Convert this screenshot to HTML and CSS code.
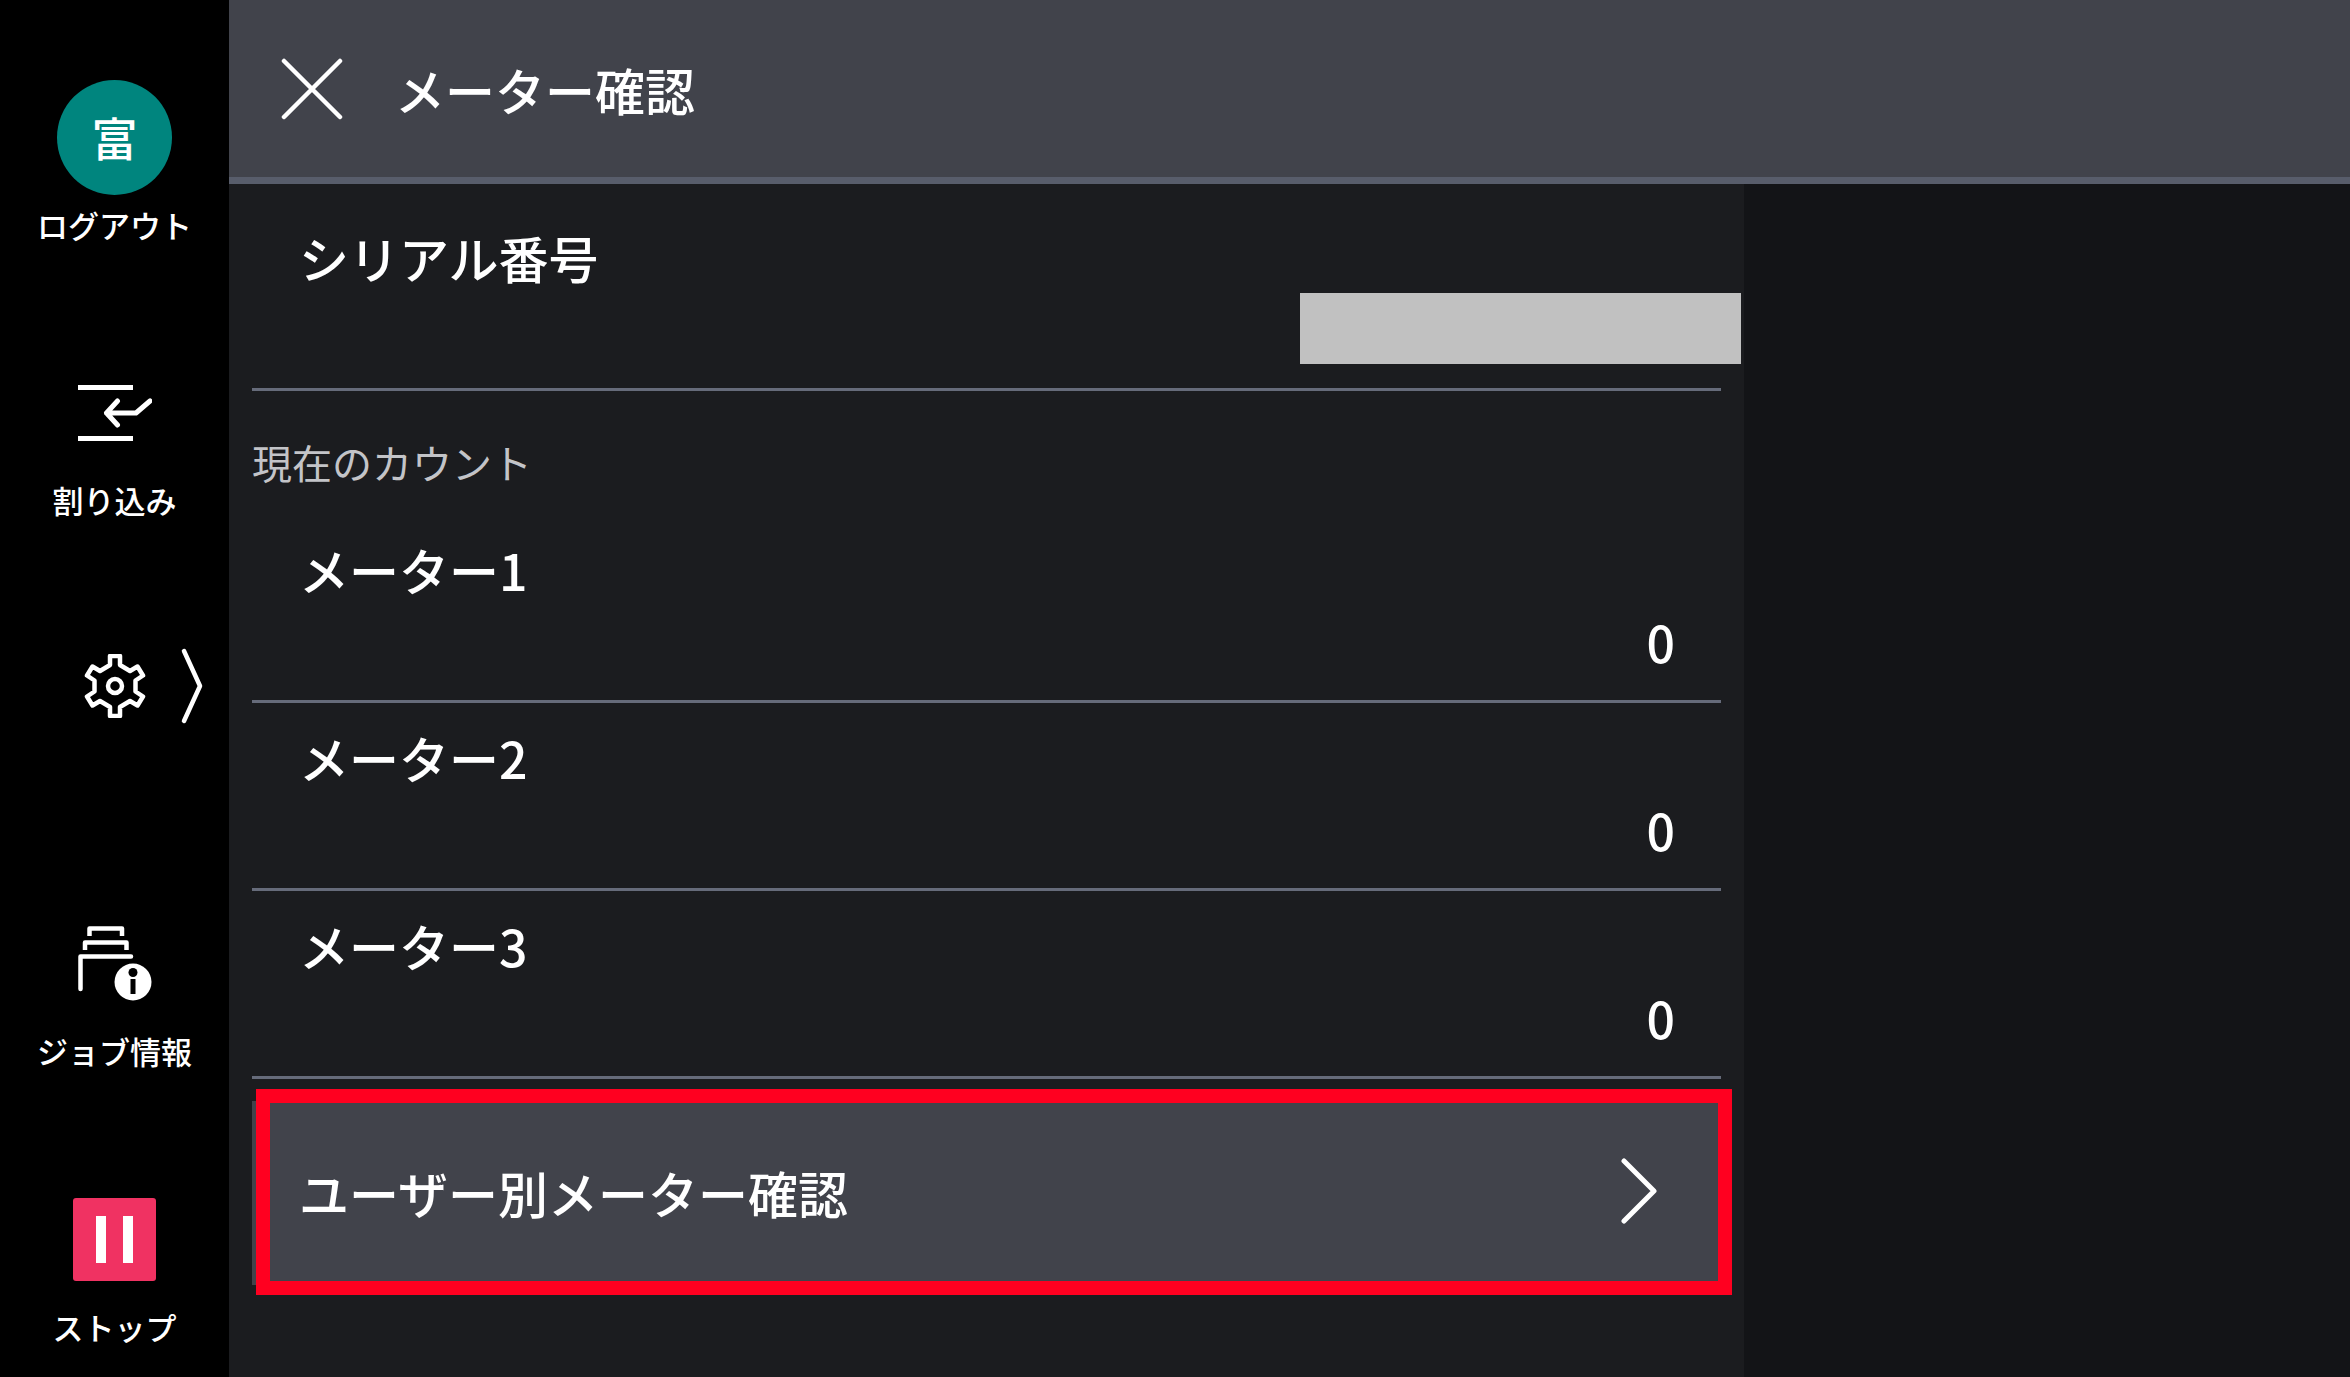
FILE: index.html
```html
<!DOCTYPE html>
<html lang="ja">
<head>
  <meta charset="UTF-8" />
  <meta name="viewport" content="width=device-width, initial-scale=1.0" />
  <title>メーター確認</title>
  <link rel="stylesheet" href="styles.css">
</head>
<body>
  <nav class="sidebar">
    <button class="side-item">
      <span class="side-icon"><span class="avatar">富</span></span>
      <span class="side-label">ログアウト</span>
    </button>
    <button class="side-item">
      <span class="side-icon">
        <svg width="74" height="56" viewBox="0 0 74 56" fill="none" stroke="#fff" stroke-width="5">
          <path d="M0 2.5H55M0 53.5H55" />
          <path d="M39.5 16L28.5 28L39.5 40M28.5 28H58L72 16" stroke-linecap="round" stroke-linejoin="round" />
        </svg>
      </span>
      <span class="side-label">割り込み</span>
    </button>
    <button class="side-item side-settings" aria-label="設定">
      <svg width="64" height="64" viewBox="-32 -32 64 64" fill="none" stroke="#fff" stroke-width="4.5" stroke-linejoin="round">
        <path d="M-5 -30H5V-21L15 -15L22.5 -19.5L28 -10.5L20.5 -5.5V5.5L28 10.5L22.5 19.5L15 15L5 21V30H-5V21L-15 15L-22.5 19.5L-28 10.5L-20.5 5.5V-5.5L-28 -10.5L-22.5 -19.5L-15 -15L-5 -21Z" />
        <circle r="7" />
      </svg>
      <svg class="side-arrow" width="24" height="76" viewBox="0 0 24 76" fill="none" stroke="#fff" stroke-width="4.5" stroke-linecap="round" stroke-linejoin="round">
        <path d="M4 3L20 38L4 73" />
      </svg>
    </button>
    <button class="side-item">
      <span class="side-icon">
        <svg width="74" height="75" viewBox="0 0 74 75" fill="none" stroke="#fff" stroke-width="4.5" stroke-linejoin="round">
          <path d="M11.5 10V2.5H44V10M7 24V16.5H48.5V24" />
          <path d="M2.5 63V30.5H53" stroke-linecap="round" />
          <circle cx="55" cy="56" r="18.5" fill="#fff" stroke="none" />
          <circle cx="55" cy="46.5" r="4.5" fill="#000" stroke="none" />
          <path d="M55 53V68" stroke="#000" stroke-width="5" />
        </svg>
      </span>
      <span class="side-label">ジョブ情報</span>
    </button>
    <button class="side-item">
      <span class="side-icon">
        <svg width="83" height="83" viewBox="0 0 83 83">
          <rect width="83" height="83" rx="3" fill="#f03262" />
          <path d="M23 18H33V65H23ZM50 18H60V65H50Z" fill="#fff" />
        </svg>
      </span>
      <span class="side-label">ストップ</span>
    </button>
  </nav>

  <div class="screen">
    <header class="header">
      <button class="close" aria-label="閉じる">
        <svg width="62" height="62" viewBox="0 0 62 62" fill="none" stroke="#fff" stroke-width="4.5" stroke-linecap="round">
          <path d="M3 3L59 59M59 3L3 59" />
        </svg>
      </button>
      <h1>メーター確認</h1>
    </header>

    <div class="content">
      <main class="panel">
        <dl class="list">
          <div class="row">
            <dt>シリアル番号</dt>
            <dd class="masked"></dd>
          </div>
        </dl>
        <h2>現在のカウント</h2>
        <dl class="list">
          <div class="row">
            <dt>メーター1</dt>
            <dd>0</dd>
          </div>
          <div class="row">
            <dt>メーター2</dt>
            <dd>0</dd>
          </div>
          <div class="row">
            <dt>メーター3</dt>
            <dd>0</dd>
          </div>
        </dl>
        <button class="user-meter">
          <span>ユーザー別メーター確認</span>
          <svg width="36" height="68" viewBox="0 0 36 68" fill="none" stroke="#fff" stroke-width="5" stroke-linecap="round" stroke-linejoin="round">
            <path d="M3 3L33 33L3 63" />
          </svg>
        </button>
      </main>
    </div>
  </div>
</body>
</html>
```
FILE: styles.css
```css
* {
  box-sizing: border-box;
}
body {
  margin: 0;
  min-height: 100vh;
  display: grid;
  grid-template-columns: 229px 1fr;
  background: #131417;
  color: #fff;
  font-family: "Noto Sans CJK JP", sans-serif;
  font-size: 50px;
  font-weight: 500;
  line-height: 72px;
}
h1, h2, dl, dd {
  margin: 0;
}
button {
  padding: 0;
  border: none;
  background: none;
  color: inherit;
  font: inherit;
  cursor: pointer;
}
svg {
  display: block;
}

/* sidebar */
.sidebar {
  display: grid;
  grid-template-rows: repeat(5, 1fr);
  background: #000;
}
.side-item {
  display: flex;
  flex-direction: column;
  align-items: center;
  gap: 8px;
  padding-top: 80px;
}
.side-icon {
  display: flex;
  align-items: center;
  justify-content: center;
  height: 115px;
}
.avatar {
  width: 115px;
  height: 115px;
  border-radius: 50%;
  background: #00857e;
  font-size: 46px;
  line-height: 112px;
}
.side-label {
  font-size: 31px;
  line-height: 44px;
}
.side-settings {
  position: relative;
  justify-content: center;
  padding: 0 0 4px;
}
.side-arrow {
  position: absolute;
  right: 25px;
}

/* header */
.screen {
  display: flex;
  flex-direction: column;
}
.header {
  display: flex;
  align-items: center;
  gap: 52px;
  height: 184px;
  padding: 0 52px;
  background: #41434b;
  border-bottom: 7px solid #585d6b;
}
h1 {
  font-size: 50px;
  font-weight: 500;
}

/* meter list */
.content {
  flex: 1;
  display: grid;
  grid-template-columns: 5fr 2fr;
}
.panel {
  padding: 19px 23px 0;
  background: #1b1c1f;
}
.row {
  position: relative;
  height: 188px;
  padding: 18px 46px 0 47px;
  border-bottom: 3px solid #666b7a;
}
dd {
  text-align: right;
}
.masked {
  position: absolute;
  top: 90px;
  right: -20px;
  width: 441px;
  height: 71px;
  background: #c1c1c1;
}
h2 {
  padding: 35px 0 17px;
  color: #c3c4c8;
  font-size: 40px;
  font-weight: normal;
}
.user-meter {
  position: relative;
  display: flex;
  align-items: center;
  justify-content: space-between;
  width: 100%;
  height: 184px;
  margin-top: 22px;
  padding: 0 64px 2px 47px;
  background: #41434b;
}
.user-meter::after {
  content: "";
  position: absolute;
  inset: -12px -11px -10px 4px;
  border: 14px solid #ff0020;
}
```
